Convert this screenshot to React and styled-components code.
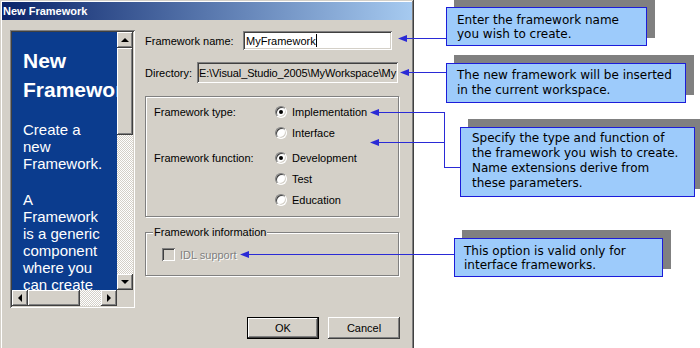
import React from "react";
import styled, { createGlobalStyle, css } from "styled-components";

const colors = {
  face: "#d4d0c8",
  shadow: "#808080",
  dark: "#404040",
  light: "#ffffff",
  panel: "#0b3c8e",
  note: "#9dcbfb",
  noteBorder: "#1c1cd9",
  arrow: "#2a2ad6",
};

const GlobalStyle = createGlobalStyle`
  html, body {
    margin: 0;
    padding: 0;
    background: #ffffff;
  }
  body {
    width: 700px;
    height: 348px;
    overflow: hidden;
  }
`;

const raised = css`
  background: ${colors.face};
  box-shadow: inset -1px -1px ${colors.dark}, inset 1px 1px ${colors.light},
    inset -2px -2px ${colors.shadow}, inset 2px 2px ${colors.face};
`;

const sunken = css`
  box-shadow: inset 1px 1px ${colors.shadow}, inset -1px -1px ${colors.light},
    inset 2px 2px ${colors.dark}, inset -2px -2px ${colors.face};
`;

const dither = css`
  background: repeating-conic-gradient(${colors.face} 0 25%, #ffffff 0 50%) 0 0 / 2px 2px;
`;

const Page = styled.div`
  position: relative;
  display: flex;
  width: 700px;
  height: 348px;
  overflow: hidden;
  background: #ffffff;
`;

const Window = styled.div`
  flex: none;
  width: 414px;
  height: 352px;
  box-sizing: border-box;
  padding: 2px;
  display: flex;
  flex-direction: column;
  background: ${colors.face};
  box-shadow: inset -1px -1px ${colors.dark}, inset 1px 1px ${colors.face},
    inset -2px -2px ${colors.shadow}, inset 2px 2px ${colors.light};
  font-family: "Liberation Sans", Arial, sans-serif;
  font-size: 11px;
  color: #000000;
`;

const TitleBar = styled.div`
  flex: none;
  height: 18px;
  display: flex;
  align-items: center;
  padding-left: 1px;
  background: linear-gradient(90deg, #0a246a, #a6caf0);
  color: #ffffff;
  font-weight: bold;
  font-size: 11px;
`;

const Body = styled.div`
  flex: 1;
  display: flex;
  gap: 10px;
  padding: 10px 0 0 8px;
`;

/* left info panel */
const InfoPanel = styled.div`
  flex: none;
  width: 125px;
  height: 278px;
  box-sizing: border-box;
  padding: 2px;
  ${sunken};
  display: grid;
  grid-template-columns: 1fr 16px;
  grid-template-rows: 1fr 16px;
`;

const InfoText = styled.div`
  background: ${colors.panel};
  color: #ffffff;
  overflow: hidden;
  padding: 14px 0 0 11px;
  font-family: "Liberation Sans", Arial, sans-serif;
`;

const InfoHeading = styled.h1`
  margin: 0;
  font-size: 21px;
  line-height: 29px;
  font-weight: bold;
  white-space: nowrap;
`;

const InfoPara = styled.p`
  margin: ${(p) => p.$gap}px 0 0;
  width: 84px;
  font-size: 15px;
  line-height: 17px;
`;

const VScroll = styled.div`
  display: flex;
  flex-direction: column;
  ${dither};
`;

const HScroll = styled.div`
  display: flex;
  ${dither};
`;

const ScrollCorner = styled.div`
  background: ${colors.face};
`;

const ScrollButton = styled.div`
  flex: none;
  width: 16px;
  height: 16px;
  box-sizing: border-box;
  ${raised};
  display: flex;
  align-items: center;
  justify-content: center;
`;

const Thumb = styled.div`
  flex: none;
  ${raised};
  ${(p) => (p.$vertical ? `height: ${p.$size}px;` : `width: ${p.$size}px;`)}
`;

const Track = styled.div`
  flex: 1;
`;

const Glyph = styled.span`
  width: 0;
  height: 0;
  ${(p) =>
    p.$dir === "up"
      ? `border-left: 4px solid transparent; border-right: 4px solid transparent; border-bottom: 4px solid #000; margin-top: -1px;`
      : p.$dir === "down"
      ? `border-left: 4px solid transparent; border-right: 4px solid transparent; border-top: 4px solid #000;`
      : p.$dir === "left"
      ? `border-top: 4px solid transparent; border-bottom: 4px solid transparent; border-right: 4px solid #000; margin-left: -1px;`
      : `border-top: 4px solid transparent; border-bottom: 4px solid transparent; border-left: 4px solid #000;`}
`;

/* form side */
const Form = styled.div`
  flex: none;
  width: 255px;
  display: flex;
  flex-direction: column;
`;

const FormRow = styled.div`
  display: flex;
  align-items: center;
  margin-top: ${(p) => p.$top}px;
  height: ${(p) => p.$height}px;
`;

const Label = styled.span`
  flex: none;
  width: ${(p) => p.$width}px;
  white-space: nowrap;
`;

const TextBox = styled.div`
  flex: none;
  width: ${(p) => p.$width}px;
  height: 100%;
  box-sizing: border-box;
  padding: 0 ${(p) => (p.$readOnly ? 2 : 3)}px;
  display: flex;
  align-items: center;
  overflow: hidden;
  white-space: nowrap;
  letter-spacing: ${(p) => (p.$readOnly ? "-0.12px" : "normal")};
  background: ${(p) => (p.$readOnly ? colors.face : "#ffffff")};
  ${sunken};
`;

const Caret = styled.span`
  display: inline-block;
  width: 1px;
  height: 13px;
  background: #000000;
`;

const GroupBox = styled.div`
  margin-top: 13px;
  width: 254px;
  height: 121px;
  box-sizing: border-box;
  padding: 5px 0 0 8px;
  border: 1px solid ${colors.shadow};
  box-shadow: inset 1px 1px ${colors.light}, 1px 1px ${colors.light};
`;

const OptionField = styled.div`
  display: flex;
  & + & {
    margin-top: 5px;
  }
`;

const OptionLabel = styled.span`
  flex: none;
  width: 121px;
  line-height: 20px;
`;

const OptionList = styled.div`
  display: flex;
  flex-direction: column;
  gap: 1px;
`;

const Option = styled.label`
  display: flex;
  align-items: center;
  gap: 5px;
  height: 20px;
`;

const Radio = styled.span`
  position: relative;
  flex: none;
  width: 12px;
  height: 12px;
  box-sizing: border-box;
  border-radius: 50%;
  background: #ffffff;
  border: 1px solid;
  border-color: ${colors.shadow} ${colors.light} ${colors.light} ${colors.shadow};
  box-shadow: inset 1px 1px ${colors.dark}, inset -1px -1px ${colors.face};
  &::after {
    content: "";
    display: ${(p) => (p.$checked ? "block" : "none")};
    position: absolute;
    left: 3px;
    top: 3px;
    width: 4px;
    height: 4px;
    border-radius: 50%;
    background: #000000;
  }
`;

const InfoGroup = styled.fieldset`
  margin: 9px 0 0;
  width: 254px;
  box-sizing: border-box;
  padding: 8px 8px 13px 7px;
  border: 1px solid ${colors.shadow};
  box-shadow: inset 1px 1px ${colors.light}, 1px 1px ${colors.light};
`;

const Legend = styled.legend`
  padding: 0 1px;
  line-height: 13px;
  background: ${colors.face};
`;

const CheckRow = styled.label`
  display: flex;
  align-items: center;
  gap: 5px;
  height: 15px;
  margin-left: 9px;
  color: ${(p) => (p.$disabled ? colors.shadow : "#000")};
  text-shadow: ${(p) => (p.$disabled ? `1px 1px ${colors.light}` : "none")};
`;

const CheckBox = styled.span`
  flex: none;
  width: 13px;
  height: 13px;
  box-sizing: border-box;
  background: ${colors.face};
  ${sunken};
`;

const ButtonRow = styled.div`
  margin-top: auto;
  margin-bottom: 11px;
  display: flex;
  justify-content: flex-end;
  gap: 9px;
`;

const Button = styled.button`
  width: 72px;
  height: 22px;
  box-sizing: border-box;
  padding: 0;
  font-family: inherit;
  font-size: 11px;
  color: #000000;
  border: ${(p) => (p.$default ? "1px solid #000" : "none")};
  ${raised};
`;

/* annotations */
const Notes = styled.div`
  position: relative;
  flex: 1;
`;

const Callout = styled.div`
  position: absolute;
  left: ${(p) => p.$x}px;
  top: ${(p) => p.$y}px;
  width: ${(p) => p.$w}px;
  height: ${(p) => p.$h}px;
  box-sizing: border-box;
  padding: ${(p) => p.$pt}px 0 0 ${(p) => p.$pl}px;
  background: ${colors.note};
  border: 1px solid ${colors.noteBorder};
  box-shadow: 8px -8px 0 ${colors.shadow};
  font-family: "DejaVu Sans", Verdana, sans-serif;
  font-size: 12px;
  line-height: ${(p) => p.$lh}px;
  color: #000000;
  white-space: nowrap;
`;

const Connectors = styled.svg`
  position: absolute;
  left: 0;
  top: 0;
  pointer-events: none;
`;

const notes = [
  { x: 32, y: 7, w: 201, h: 39, pt: 5, pl: 10, lh: 14, lines: ["Enter the framework name", "you wish to create."] },
  { x: 32, y: 63, w: 240, h: 40, pt: 4, pl: 10, lh: 15, lines: ["The new framework will be inserted", "in the current workspace."] },
  {
    x: 46, y: 127, w: 235, h: 70, pt: 3, pl: 11, lh: 15,
    lines: ["Specify the type and function of", "the framework you wish to create.", "Name extensions derive from", "these parameters."],
  },
  { x: 40, y: 238, w: 209, h: 39, pt: 5, pl: 9, lh: 14, lines: ["This option is valid only for", "interface frameworks."] },
];

const arrowHeads = [
  [398, 38],
  [400, 72],
  [370, 112],
  [370, 142],
  [240, 254],
];

const ScrollArrow = ({ dir }) => (
  <ScrollButton>
    <Glyph $dir={dir} />
  </ScrollButton>
);

const App = () => {
  return (
    <>
      <GlobalStyle />
      <Page>
        <Window>
          <TitleBar>New Framework</TitleBar>
          <Body>
            <InfoPanel>
              <InfoText>
                <InfoHeading>
                  New
                  <br />
                  Framework
                </InfoHeading>
                <InfoPara $gap={17}>Create a new Framework.</InfoPara>
                <InfoPara $gap={19}>A Framework is a generic component where you can create</InfoPara>
              </InfoText>
              <VScroll>
                <ScrollArrow dir="up" />
                <Thumb $vertical $size={87} />
                <Track />
                <ScrollArrow dir="down" />
              </VScroll>
              <HScroll>
                <ScrollArrow dir="left" />
                <Thumb $size={52} />
                <Track />
                <ScrollArrow dir="right" />
              </HScroll>
              <ScrollCorner />
            </InfoPanel>

            <Form>
              <FormRow $top={1} $height={19}>
                <Label $width={98}>Framework name:</Label>
                <TextBox $width={149}>
                  MyFramework
                  <Caret />
                </TextBox>
              </FormRow>
              <FormRow $top={12} $height={21}>
                <Label $width={52}>Directory:</Label>
                <TextBox $width={201} $readOnly>
                  {"E:\\Visual_Studio_2005\\MyWorkspace\\My"}
                </TextBox>
              </FormRow>

              <GroupBox>
                <OptionField>
                  <OptionLabel>Framework type:</OptionLabel>
                  <OptionList>
                    <Option>
                      <Radio $checked />
                      Implementation
                    </Option>
                    <Option>
                      <Radio />
                      Interface
                    </Option>
                  </OptionList>
                </OptionField>
                <OptionField>
                  <OptionLabel>Framework function:</OptionLabel>
                  <OptionList>
                    <Option>
                      <Radio $checked />
                      Development
                    </Option>
                    <Option>
                      <Radio />
                      Test
                    </Option>
                    <Option>
                      <Radio />
                      Education
                    </Option>
                  </OptionList>
                </OptionField>
              </GroupBox>

              <InfoGroup>
                <Legend>Framework information</Legend>
                <CheckRow $disabled>
                  <CheckBox />
                  IDL support
                </CheckRow>
              </InfoGroup>

              <ButtonRow>
                <Button $default>OK</Button>
                <Button>Cancel</Button>
              </ButtonRow>
            </Form>
          </Body>
        </Window>

        <Notes>
          {notes.map((n, i) => (
            <Callout key={i} $x={n.x} $y={n.y} $w={n.w} $h={n.h} $pt={n.pt} $pl={n.pl} $lh={n.lh}>
              {n.lines.map((l, j) => (
                <div key={j}>{l}</div>
              ))}
            </Callout>
          ))}
        </Notes>

        <Connectors width="700" height="348" viewBox="0 0 700 348">
          <g stroke={colors.arrow} strokeWidth="1" fill="none" shapeRendering="crispEdges">
            <path d="M404 38.5H446" />
            <path d="M406 72.5H446" />
            <path d="M376 112.5H444.5V167.5H460" />
            <path d="M376 142.5H444.5" />
            <path d="M246 254.5H454" />
          </g>
          <g fill={colors.arrow}>
            {arrowHeads.map(([x, y], i) => (
              <polygon key={i} points={`${x},${y + 0.5} ${x + 9},${y - 3} ${x + 9},${y + 4}`} />
            ))}
          </g>
        </Connectors>
      </Page>
    </>
  );
};

export default App;
